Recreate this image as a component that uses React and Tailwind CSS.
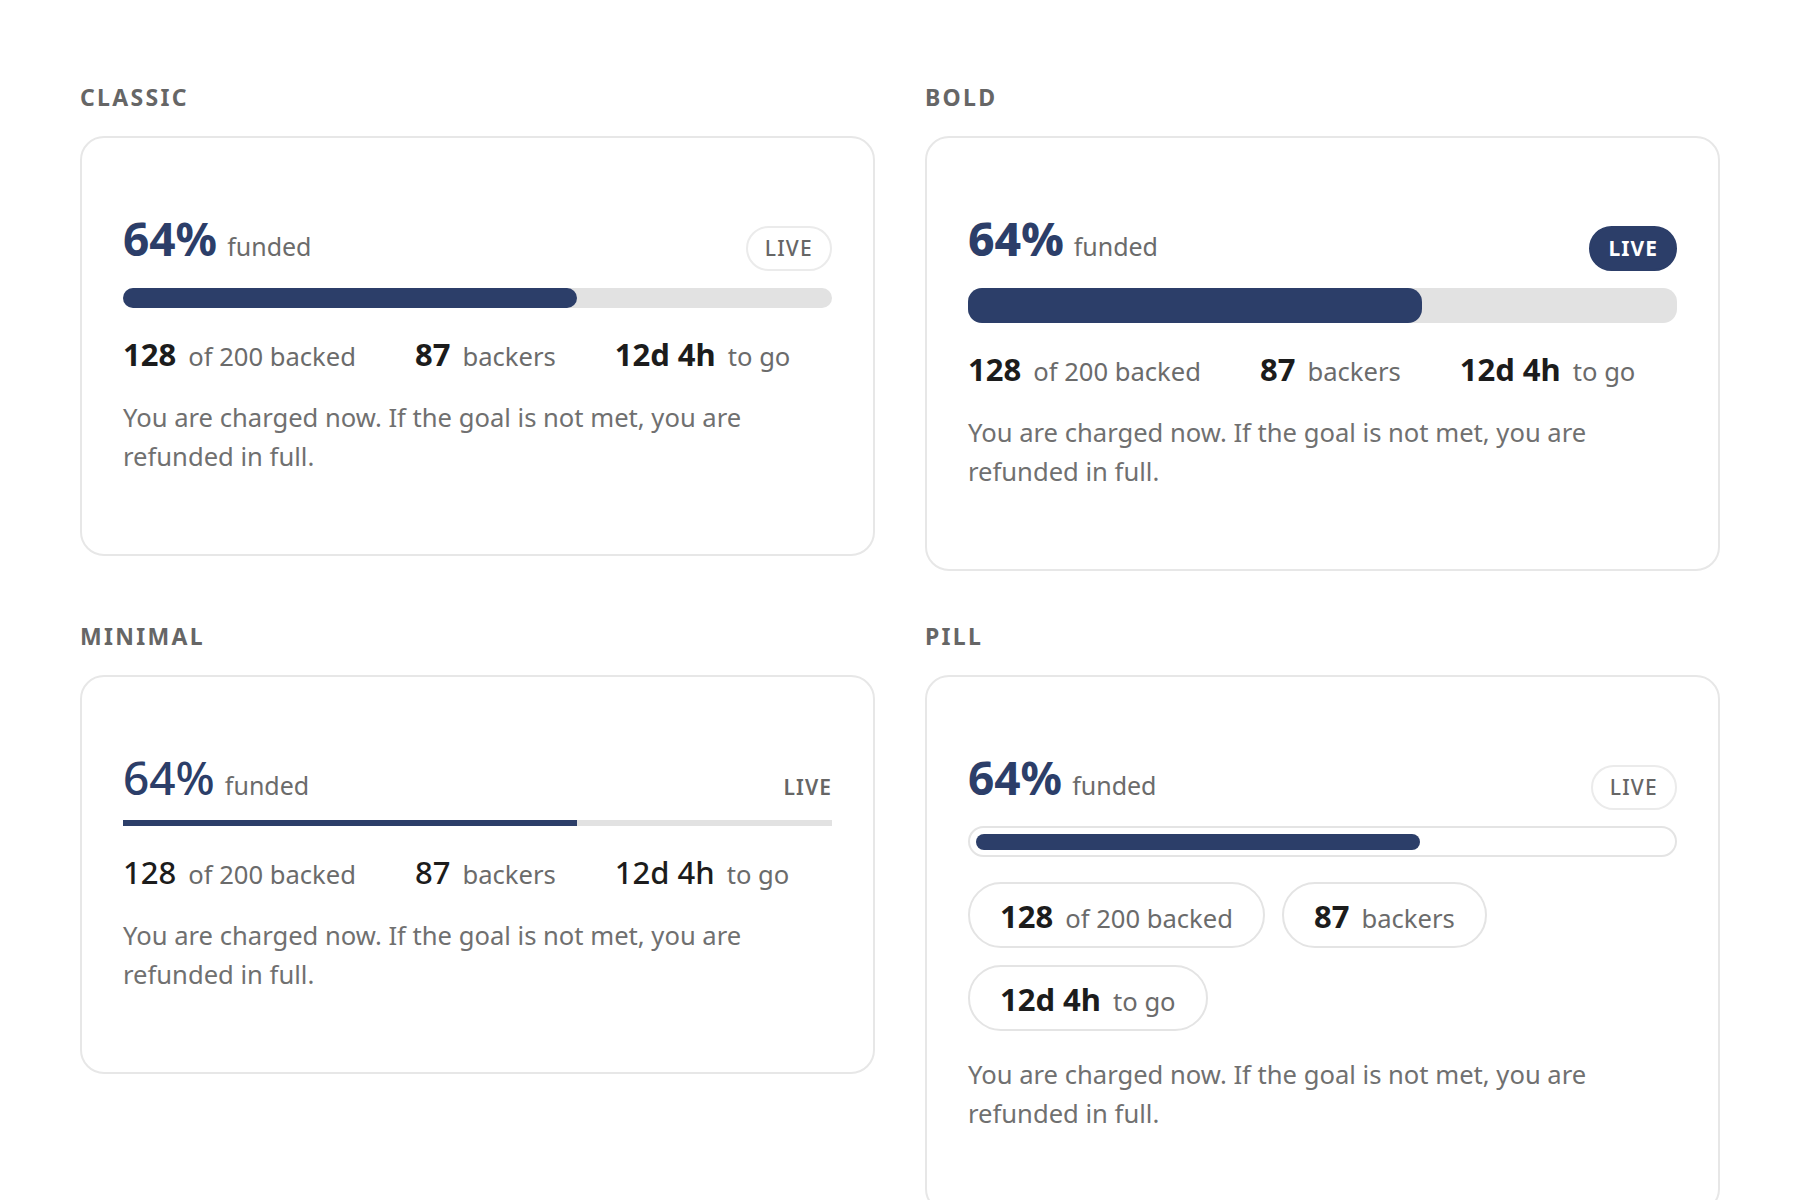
import React from "react";

const stats = [
  { n: "128", label: "of 200 backed" },
  { n: "87", label: "backers" },
  { n: "12d 4h", label: "to go" },
];

const NOTE = "You are charged now. If the goal is not met, you are refunded in full.";

function SectionLabel({ children }) {
  return (
    <div className="mb-[27px] text-[23px] font-bold leading-none tracking-[0.1em] text-[#666666]">
      {children}
    </div>
  );
}

function Card({ children }) {
  return (
    <div className="rounded-[24px] border-2 border-[#e7e7e7] bg-white px-[41px] pt-[77px] pb-[78px]">
      {children}
    </div>
  );
}

function Title({ weight }) {
  return (
    <div className="flex items-baseline gap-[10px]">
      <span className={`text-[46px] leading-none text-[#2c3e69] ${weight}`}>64%</span>
      <span className="text-[25px] leading-none text-[#6b6b6b]">funded</span>
    </div>
  );
}

function OutlineLive() {
  return (
    <span className="block h-[45px] rounded-full border-2 border-[#ebebeb] px-[17px] text-[21px] font-medium leading-[41px] tracking-[0.06em] text-[#666666]">
      LIVE
    </span>
  );
}

function SolidLive() {
  return (
    <span className="block h-[45px] rounded-full border-2 border-[#2c3e69] bg-[#2c3e69] px-[17px] text-[21px] font-bold leading-[41px] tracking-[0.05em] text-white">
      LIVE
    </span>
  );
}

function Stat({ n, label, numWeight = "font-bold" }) {
  return (
    <div className="flex items-baseline gap-3">
      <span className={`text-[31px] leading-none text-[#1c1c1c] ${numWeight}`}>{n}</span>
      <span className="text-[25.6px] leading-none text-[#6b6b6b]">{label}</span>
    </div>
  );
}

function StatRow({ numWeight, className = "mt-[31px]" }) {
  return (
    <div className={`${className} flex items-baseline gap-x-[59px]`}>
      {stats.map((s) => (
        <Stat key={s.n} n={s.n} label={s.label} numWeight={numWeight} />
      ))}
    </div>
  );
}

function Note({ className = "mt-[28px]" }) {
  return <p className={`${className} text-[25.6px] leading-[39px] text-[#707070]`}>{NOTE}</p>;
}

function ClassicCard() {
  return (
    <Card>
      <div className="flex items-baseline justify-between">
        <Title weight="font-bold" />
        <OutlineLive />
      </div>
      <div className="mt-[17px] h-[20px] w-full rounded-full bg-[#e2e2e2]">
        <div className="h-full rounded-full bg-[#2c3e69]" style={{ width: "64%" }} />
      </div>
      <StatRow numWeight="font-bold" />
      <Note />
    </Card>
  );
}

function BoldCard() {
  return (
    <Card>
      <div className="flex items-baseline justify-between">
        <Title weight="font-extrabold" />
        <SolidLive />
      </div>
      <div className="mt-[17px] h-[35px] w-full rounded-[14px] bg-[#e2e2e2]">
        <div className="h-full rounded-[14px] bg-[#2c3e69]" style={{ width: "64%" }} />
      </div>
      <StatRow numWeight="font-bold" />
      <Note />
    </Card>
  );
}

function MinimalCard() {
  return (
    <Card>
      <div className="flex items-baseline justify-between">
        <Title weight="font-medium" />
        <span className="text-[21px] font-semibold leading-none tracking-[0.05em] text-[#666666]">LIVE</span>
      </div>
      <div className="mt-[20px] h-[6px] w-full bg-[#e2e2e2]">
        <div className="h-full bg-[#2c3e69]" style={{ width: "64%" }} />
      </div>
      <StatRow numWeight="font-medium" className="mt-[31px]" />
      <Note />
    </Card>
  );
}

function PillCard() {
  return (
    <Card>
      <div className="flex items-baseline justify-between">
        <Title weight="font-bold" />
        <OutlineLive />
      </div>
      <div className="mt-[16px] h-[31px] w-full rounded-full border-2 border-[#e4e4e4] bg-white p-[5.5px]">
        <div className="h-full rounded-full bg-[#2c3e69]" style={{ width: "64%" }} />
      </div>
      <div className="mt-[25px] flex flex-wrap gap-[17px]">
        {stats.map((s) => (
          <div
            key={s.n}
            className="flex items-baseline gap-3 rounded-full border-2 border-[#e4e4e4] px-[30px] pt-[17px] pb-[14px]"
          >
            <span className="text-[31px] font-bold leading-none text-[#1c1c1c]">{s.n}</span>
            <span className="text-[25.6px] leading-none text-[#6b6b6b]">{s.label}</span>
          </div>
        ))}
      </div>
      <Note className="mt-[24px]" />
    </Card>
  );
}

export default function App() {
  return (
    <div className="min-h-screen bg-white px-[80px] pt-[86px] pb-[40px] font-['Noto_Sans','Open_Sans',sans-serif]">
      <div className="grid grid-cols-2 items-start gap-x-[50px] gap-y-[54px]">
        <section>
          <SectionLabel>CLASSIC</SectionLabel>
          <ClassicCard />
        </section>
        <section>
          <SectionLabel>BOLD</SectionLabel>
          <BoldCard />
        </section>
        <section>
          <SectionLabel>MINIMAL</SectionLabel>
          <MinimalCard />
        </section>
        <section>
          <SectionLabel>PILL</SectionLabel>
          <PillCard />
        </section>
      </div>
    </div>
  );
}
